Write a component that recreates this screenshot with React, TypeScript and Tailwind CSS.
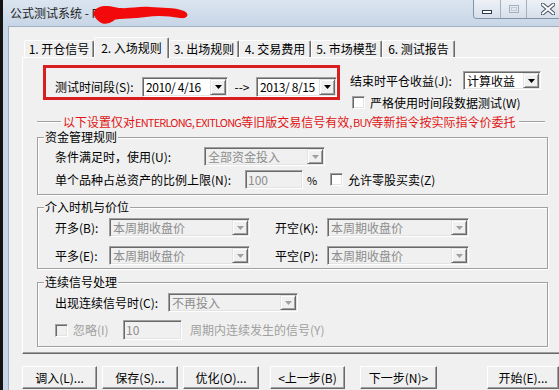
import type { ReactNode } from "react";

const SUNKEN =
  "border border-t-[#a0a0a0] border-l-[#a0a0a0] border-r-white border-b-white shadow-[inset_1px_1px_0_#696969,inset_-1px_-1px_0_#e3e3e3] p-[1px]";
const RAISED =
  "border border-t-white border-l-white border-r-[#696969] border-b-[#696969] shadow-[inset_-1px_-1px_0_#a0a0a0]";

function Arrow({ gray }: { gray?: boolean }) {
  return (
    <svg width="7" height="4" viewBox="0 0 7 4">
      <path d="M0 0H7L3.5 4Z" fill={gray ? "#a0a0a0" : "#000"} />
    </svg>
  );
}

function DropBtn({ gray }: { gray?: boolean }) {
  return (
    <div className="w-[16px] shrink-0 self-stretch flex items-center justify-center bg-[#f0f0f0] border border-t-[#e3e3e3] border-l-[#e3e3e3] border-r-[#696969] border-b-[#696969] shadow-[inset_1px_1px_0_#fff,inset_-1px_-1px_0_#a0a0a0]">
      <Arrow gray={gray} />
    </div>
  );
}

function Combo({ text, cls, disabled, tight }: { text: string; cls: string; disabled?: boolean; tight?: boolean }) {
  return (
    <div
      className={`${cls} flex ${SUNKEN} ${
        disabled ? "bg-[#f0f0f0] text-[#8d8d8d]" : "bg-white text-black"
      }`}
    >
      <span
        className={`flex-1 flex items-center pl-[2px] whitespace-pre leading-[14px] ${
          tight ? "tracking-[-0.4px]" : ""
        }`}
      >
        {text}
      </span>
      <DropBtn gray={disabled} />
    </div>
  );
}

function Field({ text, cls }: { text: string; cls: string }) {
  return (
    <div className={`${cls} ${SUNKEN} bg-[#f0f0f0] text-[#8d8d8d] flex items-center pl-[2px] leading-[14px]`}>
      {text}
    </div>
  );
}

function Check({ disabled }: { disabled?: boolean }) {
  return (
    <div
      className={`w-[13px] h-[13px] shrink-0 ${SUNKEN} ${disabled ? "bg-[#f0f0f0]" : "bg-white"}`}
    />
  );
}

function Group({ title, cls, children }: { title: string; cls: string; children: ReactNode }) {
  return (
    <fieldset
      className={`ml-[14px] w-[511px] border border-[#a0a0a0] shadow-[inset_1px_1px_0_#fff,1px_1px_0_#fff] ${cls}`}
    >
      <legend className="ml-[6px] px-[1px] leading-[14px] bg-[#f0f0f0]">{title}</legend>
      {children}
    </fieldset>
  );
}

const tabs = [
  { label: "1. 开仓信号", w: "w-[70px]" },
  { label: "2. 入场规则", w: "w-[75px]" },
  { label: "3. 出场规则", w: "w-[70px]" },
  { label: "4. 交易费用", w: "w-[72px]" },
  { label: "5. 市场模型", w: "w-[71px]" },
  { label: "6. 测试报告", w: "w-[73px]" },
];

const buttons = [
  { label: "调入(L)...", cls: "w-[75px]" },
  { label: "保存(S)...", cls: "w-[76px] ml-[5px]" },
  { label: "优化(O)...", cls: "w-[76px] ml-[5px]" },
  { label: "<上一步(B)", cls: "w-[75px] ml-[11px]" },
  { label: "下一步(N)>", cls: "w-[77px] ml-[15px]" },
  { label: "开始(E)...", cls: "w-[72px] ml-[50px]" },
];

const etched = "h-[2px] border-t border-t-[#a0a0a0] border-b border-b-white";
const latin = "text-[11px] tracking-[-0.8px]";

export default function App() {
  return (
    <div className="w-[559px] h-[390px] overflow-hidden flex bg-[#161616] text-[12px] text-black font-['Noto_Sans_CJK_SC',sans-serif]">
      <div className="w-[3px] shrink-0 bg-[#141414]" />
      <div className="w-[573px] shrink-0 flex flex-col bg-[#c8d6e7]">
        {/* title bar */}
        <div className="h-[26px] flex bg-linear-to-b from-[#dbe5f0] to-[#c7d5e6] pl-[7px] pr-[6px]">
          <div className="flex items-center h-[26px]">
            <span className="leading-[14px] text-[#1e1e1e]">公式测试系统 - F</span>
            <svg width="100" height="24" viewBox="0 0 100 24" className="-ml-[6px] mt-[1px]">
              <path
                d="M2 10 C4 4 14 3 22 5 C34 8 44 4 58 5 C70 6 82 5 92 9 C98 12 96 17 88 16 C76 14 66 13 54 15 C42 17 30 16 20 18 C10 21 2 17 2 10Z"
                fill="#f20a0a"
              />
              <path d="M4 12 C8 20 14 21 20 17" stroke="#f20a0a" strokeWidth="5" strokeLinecap="round" fill="none" />
            </svg>
          </div>
          <div className="ml-auto self-start h-[19px] flex border border-t-0 border-[#8593a8] rounded-b-[4px] overflow-hidden">
            <div className="w-[26px] flex items-center justify-center bg-linear-to-b from-[#eef2f7] to-[#d6dfea]">
              <div className="w-[10px] h-[4px] mt-[5px] border border-[#303a48] bg-white" />
            </div>
            <div className="w-[26px] flex items-center justify-center border-l border-[#a3b0c2] bg-linear-to-b from-[#eef2f7] to-[#d6dfea]">
              <div className="w-[10px] h-[8px] border border-[#a5afbd] p-[1px]">
                <div className="w-full h-full border border-[#c3cad5]" />
              </div>
            </div>
            <div className="w-[43px] flex items-center justify-center border-l border-[#a3b0c2] bg-linear-to-b from-[#eef2f7] to-[#d6dfea]">
              <svg width="14" height="12" viewBox="0 0 14 12">
                <path
                  d="M1 1 L13 11 M13 1 L1 11"
                  stroke="#4a5568"
                  strokeWidth="4"
                  strokeLinecap="square"
                />
                <path d="M1 1 L13 11 M13 1 L1 11" stroke="#fff" strokeWidth="2" />
              </svg>
            </div>
          </div>
        </div>

        {/* client area */}
        <div className="flex-1 flex pl-[5px]">
          <div className="flex-1 bg-[#f0f0f0] border-l border-t border-[#9fb0c5] pl-[13px] pt-[9px]">
            {/* tabs */}
            <div className="flex items-end h-[21px] ml-[2px] relative z-10">
              {tabs.map((t, i) =>
                i === 1 ? (
                  <div
                    key={t.label}
                    className={`${t.w} h-[21px] -mb-[1px] bg-[#f0f0f0] border-l border-t border-r border-l-white border-t-white border-r-[#696969] rounded-t-[2px] shadow-[inset_-1px_0_0_#a0a0a0] flex items-center justify-center leading-[14px] pb-[1px] whitespace-pre`}
                  >
                    {t.label}
                  </div>
                ) : (
                  <div
                    key={t.label}
                    className={`${t.w} h-[17px] bg-[#f0f0f0] border-l border-t border-r border-l-white border-t-white border-r-[#696969] rounded-t-[2px] shadow-[inset_-1px_0_0_#a0a0a0] flex items-center justify-center leading-[14px] whitespace-pre`}
                  >
                    {t.label}
                  </div>
                )
              )}
            </div>

            {/* tab panel */}
            <div className="w-[545px] border border-l-white border-t-white border-r-[#696969] border-b-[#696969] shadow-[inset_-1px_-1px_0_#a0a0a0] pb-[6px]">
              <div className="flex mt-[7px] ml-[20px]">
                <div className="w-[297px] h-[35px] border-[3px] border-[#d81e1e] flex items-start pt-[9px]">
                  <span className="ml-[9px] w-[87px] leading-[20px]">测试时间段(S):</span>
                  <Combo text="2010/ 4/16" cls="w-[86px] h-[20px]" tight />
                  <span className="w-[28px] text-center leading-[20px]">--&gt;</span>
                  <Combo text="2013/ 8/15" cls="w-[81px] h-[20px]" tight />
                </div>
                <div className="ml-[10px] pt-[6px] flex flex-col">
                  <div className="flex items-center h-[19px]">
                    <span className="w-[113px] leading-[14px]">结束时平仓收益(J):</span>
                    <Combo text="计算收益" cls="w-[78px] h-[19px]" />
                  </div>
                  <div className="flex items-center mt-[6px] ml-[2px]">
                    <Check />
                    <span className="ml-[5px] leading-[13px]">严格使用时间段数据测试(W)</span>
                  </div>
                </div>
              </div>

              <div className="flex items-center ml-[14px] w-[508px] mt-[6px] h-[14px]">
                <div className={`w-[24px] ${etched}`} />
                <span className="ml-[2px] mr-[3px] text-[#e01515] whitespace-nowrap leading-[14px]">
                  以下设置仅对<span className={latin}>ENTERLONG, EXITLONG</span>等旧版交易信号有效
                  <span className={latin}>, BUY</span>等新指令按实际指令价委托
                </span>
                <div className={`flex-1 ${etched}`} />
              </div>

              <Group title="资金管理规则" cls="mt-[1px]">
                <div className="pl-[17px] pt-[3px] pb-[5px]">
                  <div className="flex items-center h-[19px]">
                    <span className="w-[149px] leading-[14px]">条件满足时，使用(U):</span>
                    <Combo text="全部资金投入" cls="w-[121px] h-[19px]" disabled />
                  </div>
                  <div className="flex items-center h-[19px] mt-[4px]">
                    <span className="w-[190px] leading-[14px]">单个品种占总资产的比例上限(N):</span>
                    <Field text="100" cls="w-[58px] h-[19px]" />
                    <span className="w-[27px] pl-[4px] leading-[14px] text-[11px]">%</span>
                    <Check />
                    <span className="ml-[5px] leading-[14px]">允许零股买卖(Z)</span>
                  </div>
                </div>
              </Group>

              <Group title="介入时机与价位" cls="mt-[5px]">
                <div className="pl-[17px] pt-[4px] pb-[3px]">
                  <div className="flex items-center h-[19px]">
                    <span className="w-[54px] leading-[14px]">开多(B):</span>
                    <Combo text="本周期收盘价" cls="w-[141px] h-[19px]" disabled />
                    <span className="ml-[25px] w-[52px] leading-[14px]">开空(K):</span>
                    <Combo text="本周期收盘价" cls="w-[142px] h-[19px]" disabled />
                  </div>
                  <div className="flex items-center h-[19px] mt-[9px]">
                    <span className="w-[54px] leading-[14px]">平多(E):</span>
                    <Combo text="本周期收盘价" cls="w-[141px] h-[19px]" disabled />
                    <span className="ml-[25px] w-[52px] leading-[14px]">平空(P):</span>
                    <Combo text="本周期收盘价" cls="w-[142px] h-[19px]" disabled />
                  </div>
                </div>
              </Group>

              <Group title="连续信号处理" cls="mt-[6px]">
                <div className="pl-[17px] pt-[4px] pb-[6px]">
                  <div className="flex items-center h-[19px]">
                    <span className="w-[113px] leading-[14px]">出现连续信号时(C):</span>
                    <Combo text="不再投入" cls="w-[130px] h-[19px]" disabled />
                  </div>
                  <div className="flex items-center h-[20px] mt-[8px] text-[#a0a0a0]">
                    <Check disabled />
                    <span className="ml-[5px] w-[50px] leading-[14px]">忽略(I)</span>
                    <Field text="10" cls="w-[59px] h-[20px]" />
                    <span className="ml-[8px] leading-[14px]">周期内连续发生的信号(Y)</span>
                  </div>
                </div>
              </Group>
            </div>

            {/* bottom buttons */}
            <div className="flex mt-[12px]">
              {buttons.map((b) => (
                <div
                  key={b.label}
                  className={`${b.cls} h-[23px] shrink-0 ${RAISED} bg-[#f0f0f0] flex items-center justify-center leading-[14px] whitespace-pre`}
                >
                  {b.label}
                </div>
              ))}
            </div>
          </div>
        </div>
      </div>
    </div>
  );
}
